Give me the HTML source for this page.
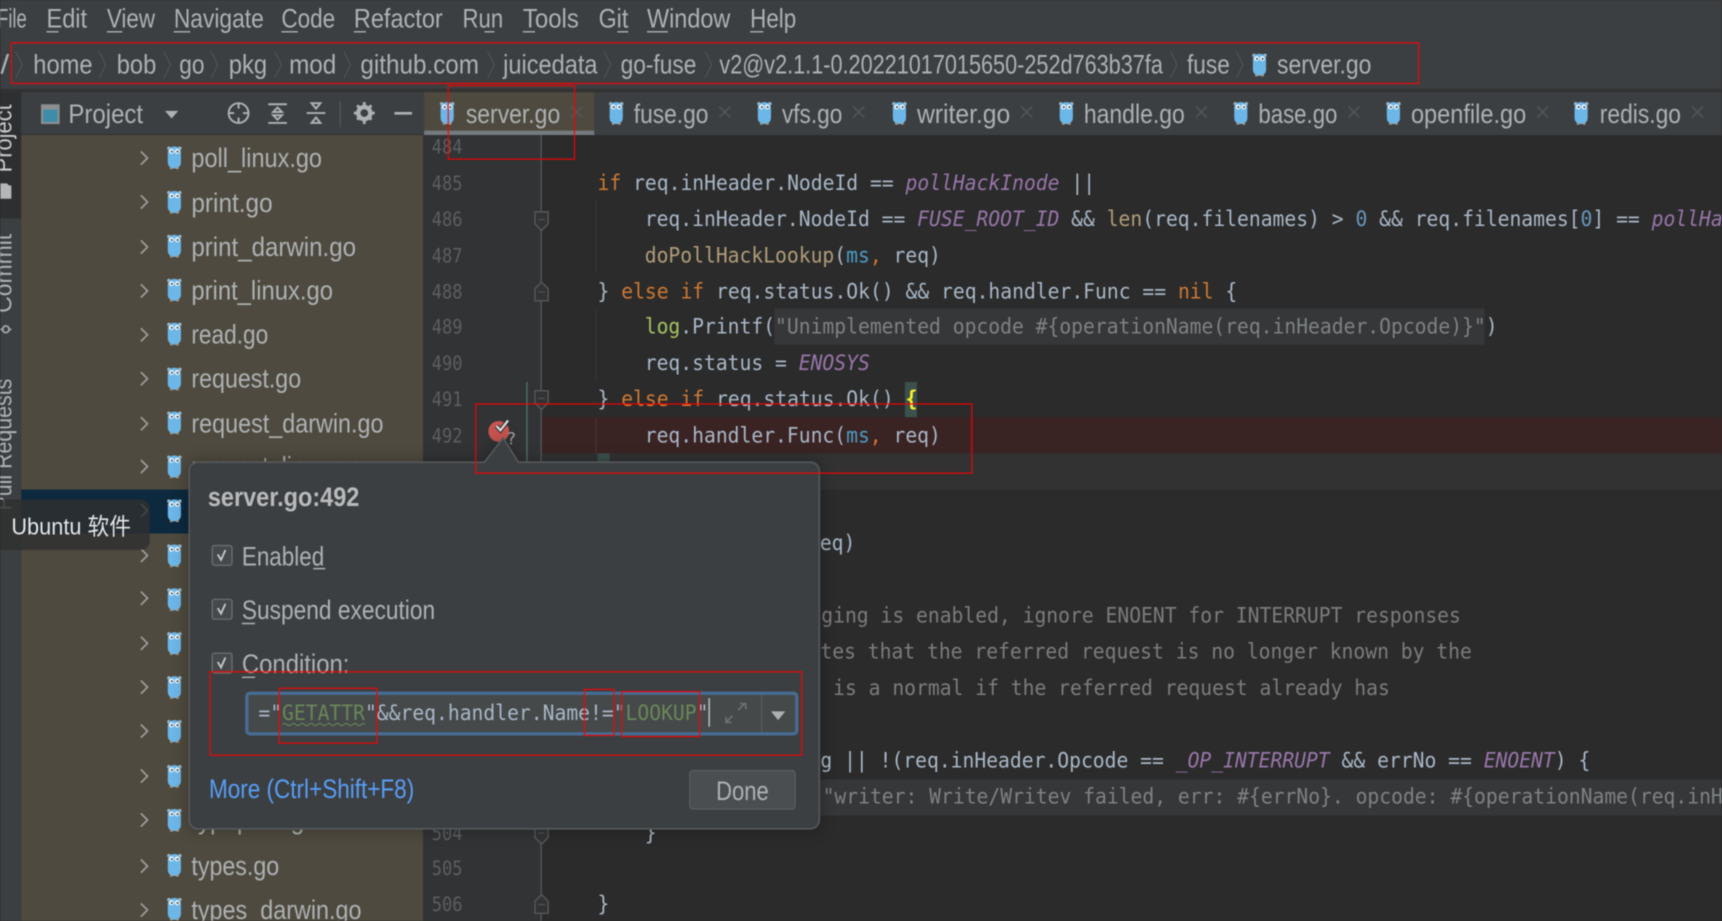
<!DOCTYPE html>
<html lang="en"><head><meta charset="utf-8"><title>GoLand</title>
<style>
html,body{margin:0;padding:0;background:#2b2b2b;width:1722px;height:921px;overflow:hidden}
svg{display:block;filter:blur(.45px)}
text{white-space:pre}
.u{font-family:"Liberation Sans","Noto Sans CJK SC",sans-serif;font-size:24.5px;fill:#aeb1b3}
.c{font-family:"DejaVu Sans Mono","Liberation Mono",monospace;font-size:19.5px;fill:#a9b7c6}
.n{font-family:"DejaVu Sans Mono","Liberation Mono",monospace;font-size:18px;fill:#5c5f61}
.k{fill:#cc7832}.p{fill:#9876aa;font-style:italic}.b{fill:#4a9dc5}.f{fill:#b09d79}.d{fill:#6897bb}.g{fill:#7f8284}.y{fill:#a5c261}.s{fill:#6a8759}.m{fill:#7c7c7c}
.x{stroke:#56595b;stroke-width:1.2;fill:none}
.chev{stroke:#9c9c9c;stroke-width:1.6;fill:none}
.bc{stroke:#505456;stroke-width:1;fill:none}
.ul{stroke:#aeb1b3;stroke-width:1.3}
.fold{stroke:#55585a;stroke-width:1.3;fill:#313335}
.r{stroke:#f00;stroke-width:1;fill:none}
</style></head><body>
<svg xmlns="http://www.w3.org/2000/svg" width="1722" height="921" viewBox="0 0 1568 839">
<defs>
<g id="go">
<circle cx="-5" cy="-7.5" r="1.6" fill="#9db5c4"/><circle cx="5" cy="-7.5" r="1.6" fill="#9db5c4"/>
<rect x="-6" y="-9" width="12" height="20" rx="5.5" fill="#6cb6e8"/>
<rect x="-4" y="10" width="2.4" height="1.6" fill="#a89a85"/><rect x="1.6" y="10" width="2.4" height="1.6" fill="#a89a85"/>
<circle cx="-2.6" cy="-4.6" r="2.3" fill="#e9f2f7"/><circle cx="2.6" cy="-4.6" r="2.3" fill="#e9f2f7"/>
<circle cx="-2.3" cy="-4.4" r=".9" fill="#33414b"/><circle cx="2.9" cy="-4.4" r=".9" fill="#33414b"/>
</g>
<g id="cb"><rect x="-9" y="-9" width="18" height="18" rx="2" fill="#45494b" stroke="#6b6e70" stroke-width="1.2"/><path d="M-4-1l3 5 4-9" fill="none" stroke="#c4c6c8" stroke-width="1.7"/></g>
</defs>

<rect width="1568" height="839" fill="#2b2b2b"/>
<rect width="1568" height="81" fill="#3c3f41"/>
<rect y="81" width="1568" height="3" fill="#323232"/>

<!-- menu -->
<g class="u">
<text x="-3" y="25" textLength="27" lengthAdjust="spacingAndGlyphs">File</text>
<text x="42" y="25" textLength="37" lengthAdjust="spacingAndGlyphs">Edit</text>
<text x="97" y="25" textLength="44" lengthAdjust="spacingAndGlyphs">View</text>
<text x="158" y="25" textLength="82" lengthAdjust="spacingAndGlyphs">Navigate</text>
<text x="256" y="25" textLength="49" lengthAdjust="spacingAndGlyphs">Code</text>
<text x="322" y="25" textLength="81" lengthAdjust="spacingAndGlyphs">Refactor</text>
<text x="421" y="25" textLength="37" lengthAdjust="spacingAndGlyphs">Run</text>
<text x="476" y="25" textLength="51" lengthAdjust="spacingAndGlyphs">Tools</text>
<text x="545" y="25" textLength="27" lengthAdjust="spacingAndGlyphs">Git</text>
<text x="589" y="25" textLength="76" lengthAdjust="spacingAndGlyphs">Window</text>
<text x="683" y="25" textLength="42" lengthAdjust="spacingAndGlyphs">Help</text>
</g>
<g class="ul">
<path d="M42 29h11M97 29h14M158 29h15M256 29h15M322 29h11M441 29h9M476 29h11M562 29h10M589 29h19M683 29h12"/>
</g>

<!-- breadcrumbs -->
<g class="u">
<text x="0" y="67" textLength="8" lengthAdjust="spacingAndGlyphs">/</text>
<text x="30" y="67" textLength="54" lengthAdjust="spacingAndGlyphs">home</text>
<text x="106" y="67" textLength="36" lengthAdjust="spacingAndGlyphs">bob</text>
<text x="163" y="67" textLength="23" lengthAdjust="spacingAndGlyphs">go</text>
<text x="208" y="67" textLength="35" lengthAdjust="spacingAndGlyphs">pkg</text>
<text x="263" y="67" textLength="43" lengthAdjust="spacingAndGlyphs">mod</text>
<text x="328" y="67" textLength="108" lengthAdjust="spacingAndGlyphs">github.com</text>
<text x="458" y="67" textLength="86" lengthAdjust="spacingAndGlyphs">juicedata</text>
<text x="565" y="67" textLength="69" lengthAdjust="spacingAndGlyphs">go-fuse</text>
<text x="655" y="67" textLength="404" lengthAdjust="spacingAndGlyphs">v2@v2.1.1-0.20221017015650-252d763b37fa</text>
<text x="1081" y="67" textLength="39" lengthAdjust="spacingAndGlyphs">fuse</text>
<text x="1163" y="67" textLength="86" lengthAdjust="spacingAndGlyphs">server.go</text>
</g>
<g class="bc">
<path d="M14 47l6 12-6 12M90 47l6 12-6 12M149 47l6 12-6 12M192 47l6 12-6 12M250 47l6 12-6 12M313 47l6 12-6 12M444 47l6 12-6 12M550 47l6 12-6 12M642 47l6 12-6 12M1066 47l6 12-6 12M1126 47l6 12-6 12"/>
</g>
<use href="#go" x="1147" y="58"/>

<!-- left strip -->
<rect x="0" y="84" width="19" height="755" fill="#3c3f41"/>
<rect x="0" y="84" width="19" height="115" fill="#2d2f30"/>
<g class="u" style="font-size:22px">
<text transform="translate(10 157) rotate(-90)" textLength="62" lengthAdjust="spacingAndGlyphs" style="fill:#c8cacb">Project</text>
<text transform="translate(10 285) rotate(-90)" textLength="72" lengthAdjust="spacingAndGlyphs">Commit</text>
<text transform="translate(10 465) rotate(-90)" textLength="120" lengthAdjust="spacingAndGlyphs">Pull Requests</text>
</g>
<path d="M0 167h6l2 2h2v12H0z" fill="#b4b6b8"/>
<path d="M0 300h3M7 300h3" stroke="#a5a7a9" stroke-width="1.6"/><circle cx="5" cy="300" r="3" fill="none" stroke="#a5a7a9" stroke-width="1.6"/>

<!-- project tree -->
<rect x="19" y="84" width="366" height="39" fill="#3c3f41"/>
<rect x="19" y="122" width="366" height="1" fill="#323232"/>
<rect x="19" y="123" width="366" height="716" fill="#4e4a3f"/>
<rect x="19" y="446" width="366" height="40" fill="#0d293e"/>
<rect x="37" y="95" width="17" height="18" fill="#8b8f92"/><rect x="39" y="100" width="13" height="11" fill="#3d8caa"/>
<text class="u" x="62" y="112" textLength="68" lengthAdjust="spacingAndGlyphs">Project</text>
<path d="M150 101h12l-6 7z" fill="#aeb1b3"/>
<g fill="none" stroke="#aeb1b3" stroke-width="1.8">
<circle cx="217" cy="103" r="9"/><path d="M217 94v5M217 107v5M208 103h5M221 103h5"/>
<path d="M244 95h17M244 112h17M252.500 98l-4 4h8zM252.500 109l-4-4h8z" />
<path d="M279 103h17M287.500 99l-4-5h8zM287.500 107l-4 5h8z"/>
</g>
<rect x="309" y="92" width="1" height="24" fill="#55585a"/>
<circle cx="331.500" cy="103" r="5.500" fill="none" stroke="#aeb1b3" stroke-width="4"/>
<path d="M331.500 93v3M331.500 110v3M322 103h3M338 103h3M325 96l2 2M336 107l2 2M338 96l-2 2M327 107l-2 2" stroke="#aeb1b3" stroke-width="2.6"/>
<rect x="359" y="102" width="16" height="2.400" fill="#aeb1b3"/>

<g class="chev">
<path d="M128 138l6 6-6 6M128 178l6 6-6 6M128 219l6 6-6 6M128 259l6 6-6 6M128 299l6 6-6 6M128 339l6 6-6 6M128 380l6 6-6 6M128 419l6 6-6 6M128 459l6 6-6 6M128 500l6 6-6 6M128 539l6 6-6 6M128 580l6 6-6 6M128 620l6 6-6 6M128 660l6 6-6 6M128 701l6 6-6 6M128 741l6 6-6 6M128 783l6 6-6 6M128 823l6 6-6 6"/>
</g>
<use href="#go" x="158.500" y="142.500"/><use href="#go" x="158.500" y="183"/><use href="#go" x="158.500" y="223"/><use href="#go" x="158.500" y="263"/><use href="#go" x="158.500" y="303"/><use href="#go" x="158.500" y="344"/><use href="#go" x="158.500" y="384"/><use href="#go" x="158.500" y="424"/><use href="#go" x="158.500" y="464"/><use href="#go" x="158.500" y="505"/><use href="#go" x="158.500" y="545"/><use href="#go" x="158.500" y="585"/><use href="#go" x="158.500" y="625"/><use href="#go" x="158.500" y="665"/><use href="#go" x="158.500" y="706"/><use href="#go" x="158.500" y="746"/><use href="#go" x="158.500" y="787"/><use href="#go" x="158.500" y="827"/>
<g class="u">
<text x="174" y="152" textLength="119" lengthAdjust="spacingAndGlyphs">poll_linux.go</text>
<text x="174" y="193" textLength="74" lengthAdjust="spacingAndGlyphs">print.go</text>
<text x="174" y="233" textLength="150" lengthAdjust="spacingAndGlyphs">print_darwin.go</text>
<text x="174" y="273" textLength="129" lengthAdjust="spacingAndGlyphs">print_linux.go</text>
<text x="174" y="313" textLength="70" lengthAdjust="spacingAndGlyphs">read.go</text>
<text x="174" y="353" textLength="100" lengthAdjust="spacingAndGlyphs">request.go</text>
<text x="174" y="394" textLength="175" lengthAdjust="spacingAndGlyphs">request_darwin.go</text>
<text x="174" y="433" textLength="155" lengthAdjust="spacingAndGlyphs">request_linux.go</text>
<text x="174" y="755" textLength="115" lengthAdjust="spacingAndGlyphs">typeprint.go</text>
<text x="174" y="797" textLength="80" lengthAdjust="spacingAndGlyphs">types.go</text>
<text x="174" y="837" textLength="155" lengthAdjust="spacingAndGlyphs">types_darwin.go</text>
</g>

<!-- tabs -->
<rect x="385" y="84" width="1183" height="39" fill="#3c3f41"/>
<rect x="386" y="84" width="155" height="35" fill="#4e4a3f"/>
<rect x="386" y="119" width="155" height="4" fill="#747a80"/>
<g class="u">
<text x="424" y="112" textLength="86" lengthAdjust="spacingAndGlyphs">server.go</text>
<text x="577" y="112" textLength="68" lengthAdjust="spacingAndGlyphs">fuse.go</text>
<text x="712" y="112" textLength="55" lengthAdjust="spacingAndGlyphs">vfs.go</text>
<text x="835" y="112" textLength="85" lengthAdjust="spacingAndGlyphs">writer.go</text>
<text x="987" y="112" textLength="92" lengthAdjust="spacingAndGlyphs">handle.go</text>
<text x="1146" y="112" textLength="72" lengthAdjust="spacingAndGlyphs">base.go</text>
<text x="1285" y="112" textLength="105" lengthAdjust="spacingAndGlyphs">openfile.go</text>
<text x="1457" y="112" textLength="74" lengthAdjust="spacingAndGlyphs">redis.go</text>
</g>
<use href="#go" x="407" y="102"/><use href="#go" x="561" y="102"/><use href="#go" x="696" y="102"/><use href="#go" x="819" y="102"/><use href="#go" x="971" y="102"/><use href="#go" x="1130" y="102"/><use href="#go" x="1269" y="102"/><use href="#go" x="1440" y="102"/>
<path class="x" d="M520 97l10 10M530 97l-10 10M655 97l10 10M665 97l-10 10M777 97l10 10M787 97l-10 10M930 97l10 10M940 97l-10 10M1089 97l10 10M1099 97l-10 10M1228 97l10 10M1238 97l-10 10M1400 97l10 10M1410 97l-10 10M1541 97l10 10M1551 97l-10 10"/>

<!-- gutter -->
<rect x="385" y="123" width="108" height="716" fill="#313335"/>

<!-- editor highlights -->
<rect x="493" y="380" width="1075" height="33" fill="#3a2323"/>
<rect x="493" y="413" width="1075" height="33" fill="#323232"/>
<rect x="705" y="281" width="647" height="33" fill="#353739"/>
<rect x="745" y="710" width="823" height="33" fill="#353739"/>
<rect x="824" y="348" width="11" height="32" fill="#3b514d"/>
<rect x="544" y="413" width="11" height="22" fill="#3b514d"/>

<!-- line numbers -->
<g class="n">
<text x="393" y="140" textLength="28" lengthAdjust="spacingAndGlyphs">484</text>
<text x="393" y="173" textLength="28" lengthAdjust="spacingAndGlyphs">485</text>
<text x="393" y="206" textLength="28" lengthAdjust="spacingAndGlyphs">486</text>
<text x="393" y="239" textLength="28" lengthAdjust="spacingAndGlyphs">487</text>
<text x="393" y="272" textLength="28" lengthAdjust="spacingAndGlyphs">488</text>
<text x="393" y="304" textLength="28" lengthAdjust="spacingAndGlyphs">489</text>
<text x="393" y="337" textLength="28" lengthAdjust="spacingAndGlyphs">490</text>
<text x="393" y="370" textLength="28" lengthAdjust="spacingAndGlyphs">491</text>
<text x="393" y="403" textLength="28" lengthAdjust="spacingAndGlyphs">492</text>
<text x="393" y="765" textLength="28" lengthAdjust="spacingAndGlyphs">504</text>
<text x="393" y="797" textLength="28" lengthAdjust="spacingAndGlyphs">505</text>
<text x="393" y="830" textLength="28" lengthAdjust="spacingAndGlyphs">506</text>
</g>

<!-- fold line + markers -->
<rect x="492" y="123" width="1.200" height="716" fill="#55585a"/>
<rect x="479" y="348" width="1.400" height="75" fill="#4b6f60"/>
<path class="fold" d="M487 193h12v11l-6 6-6-6z"/><path d="M490 200h6" stroke="#55585a"/>
<path class="fold" d="M487 274h12v-11l-6-6-6 6z"/><path d="M490 266h6" stroke="#55585a"/>
<path class="fold" d="M487 356h12v11l-6 6-6-6z"/><path d="M490 363h6" stroke="#55585a"/>
<path class="fold" d="M487 752h12v11l-6 6-6-6z"/><path d="M490 759h6" stroke="#55585a"/>
<path class="fold" d="M487 832h12v-11l-6-6-6 6z"/><path d="M490 824h6" stroke="#55585a"/>
<rect x="542" y="183" width="1" height="64" fill="#373737"/>
<rect x="542" y="281" width="1" height="66" fill="#373737"/>
<rect x="542" y="381" width="1" height="32" fill="#4a3535"/>

<!-- code -->
<g class="c">
<text transform="translate(544 173) scale(.92 1)"><tspan class="k">if</tspan> req.inHeader.NodeId == <tspan class="p">pollHackInode</tspan> ||</text>
<text transform="translate(587 206) scale(.92 1)">req.inHeader.NodeId == <tspan class="p">FUSE_ROOT_ID</tspan> &amp;&amp; <tspan class="f">len</tspan>(req.filenames) &gt; <tspan class="d">0</tspan> &amp;&amp; req.filenames[<tspan class="d">0</tspan>] == <tspan class="p">pollHackName</tspan></text>
<text transform="translate(587 239) scale(.92 1)"><tspan class="f">doPollHackLookup</tspan>(<tspan class="b">ms</tspan><tspan class="k">,</tspan> req)</text>
<text transform="translate(544 272) scale(.92 1)">} <tspan class="k">else if</tspan> req.status.Ok() &amp;&amp; req.handler.Func == <tspan class="k">nil</tspan> {</text>
<text transform="translate(587 304) scale(.92 1)"><tspan class="y">log</tspan>.Printf(<tspan class="g">"Unimplemented opcode #{operationName(req.inHeader.Opcode)}"</tspan>)</text>
<text transform="translate(587 337) scale(.92 1)">req.status = <tspan class="p">ENOSYS</tspan></text>
<text transform="translate(544 370) scale(.92 1)">} <tspan class="k">else if</tspan> req.status.Ok() <tspan style="fill:#ffef28;font-weight:bold">{</tspan></text>
<text transform="translate(587 403) scale(.92 1)">req.handler.Func(<tspan class="b">ms</tspan><tspan class="k">,</tspan> req)</text>
<text transform="translate(544 436) scale(.92 1)" style="fill:#ffef28;font-weight:bold">}</text>
<text transform="translate(746.500 501) scale(.92 1)">eq)</text>
<text transform="translate(737 567) scale(.92 1)" style="fill:#7c7c7c">gging is enabled, ignore ENOENT for INTERRUPT responses</text>
<text transform="translate(747 600) scale(.92 1)" style="fill:#7c7c7c">tes that the referred request is no longer known by the</text>
<text transform="translate(737 633) scale(.92 1)" style="fill:#7c7c7c">s is a normal if the referred request already has</text>
<text transform="translate(747 699) scale(.92 1)">g || !(req.inHeader.Opcode == <tspan class="p">_OP_INTERRUPT</tspan> &amp;&amp; errNo == <tspan class="p">ENOENT</tspan>) {</text>
<text transform="translate(749 732) scale(.92 1)" style="fill:#7f8284">"writer: Write/Writev failed, err: #{errNo}. opcode: #{operationName(req.inHeader.Opcode)}"</text>
<text transform="translate(587 765) scale(.92 1)">}</text>
<text transform="translate(544 830) scale(.92 1)">}</text>
</g>

<!-- breakpoint -->
<circle cx="454" cy="393" r="9.500" fill="#c75450"/>
<path d="M452 388l3.500 4 7-9" fill="none" stroke="#313335" stroke-width="4"/>
<path d="M452 388l3.500 4 7-9" fill="none" stroke="#e0e0e0" stroke-width="2"/>
<text class="n" x="461" y="405" style="fill:#a0a2a4;font-size:15px">?</text>

<!-- popup -->
<path d="M180 421H441L458 399L472 421H738a8 8 0 0 1 8 8V747a8 8 0 0 1-8 8H180a8 8 0 0 1-8-8V429a8 8 0 0 1 8-8z" fill="#3c3f41" stroke="#55585a" stroke-width="1.500" style="filter:drop-shadow(0 0 7px rgba(0,0,0,.3))"/>
<text class="u" x="189" y="461" textLength="138" lengthAdjust="spacingAndGlyphs" style="font-weight:bold;fill:#b8babc">server.go:492</text>
<use href="#cb" x="202" y="506"/><use href="#cb" x="202" y="555"/><use href="#cb" x="202" y="604"/>
<g class="u">
<text x="220" y="515" textLength="75" lengthAdjust="spacingAndGlyphs">Enabled</text>
<text x="220" y="564" textLength="176" lengthAdjust="spacingAndGlyphs">Suspend execution</text>
<text x="220" y="613" textLength="98" lengthAdjust="spacingAndGlyphs">Condition:</text>
</g>
<path class="ul" d="M285 518h11M220 568h12M220 617h12"/>
<rect x="224.500" y="631.500" width="501" height="37" rx="3" fill="#45494a" stroke="#466d94" stroke-width="3"/>
<text class="c" transform="translate(235 656) scale(.92 1)">="<tspan class="s">GETATTR</tspan>"&amp;&amp;req.handler.Name!="<tspan class="s">LOOKUP</tspan>"</text>
<path d="M257 660q2-2 4 0t4 0 4 0 4 0 4 0 4 0 4 0 4 0 4 0 4 0 4 0 4 0 4 0 4 0 4 0 4 0 4 0 4 0 3 0" fill="none" stroke="#6a8759" stroke-width="1"/>
<rect x="645" y="636" width="1.400" height="26" fill="#bbb"/>
<path d="M661 658l6-6M672 647l6-6M674 641h5v5M661 653v5h5" fill="none" stroke="#6e7173" stroke-width="1.500"/>
<rect x="693" y="633" width="1" height="34" fill="#5a5d5f"/>
<path d="M702 648h13l-6.500 8z" fill="#aeb1b3"/>
<text class="u" x="190" y="727" textLength="187" lengthAdjust="spacingAndGlyphs" style="fill:#589df6">More (Ctrl+Shift+F8)</text>
<rect x="628" y="702" width="96" height="35" rx="3" fill="#4a4e50" stroke="#5e6060"/>
<text class="u" x="652" y="729" textLength="48" lengthAdjust="spacingAndGlyphs">Done</text>

<!-- tooltip -->
<rect x="-10" y="455" width="146" height="46" rx="8" fill="#2e3030" fill-opacity=".82"/>
<text x="10" y="487" textLength="109" lengthAdjust="spacingAndGlyphs" style="font-family:'Liberation Sans','Noto Sans CJK SC',sans-serif;font-size:21px;fill:#e4e6e8">Ubuntu 软件</text>

<!-- red annotation boxes -->
<rect class="r" x="10" y="39" width="1282" height="37"/>
<rect class="r" x="408" y="78" width="115" height="67"/>
<rect class="r" x="433" y="368" width="452" height="63"/>
<rect class="r" x="191" y="612" width="539" height="76"/>
<rect class="r" x="254" y="627" width="89" height="50"/>
<rect class="r" x="532" y="628" width="27" height="42"/>
<rect class="r" x="566" y="630" width="71" height="41"/>
</svg>
</body></html>
